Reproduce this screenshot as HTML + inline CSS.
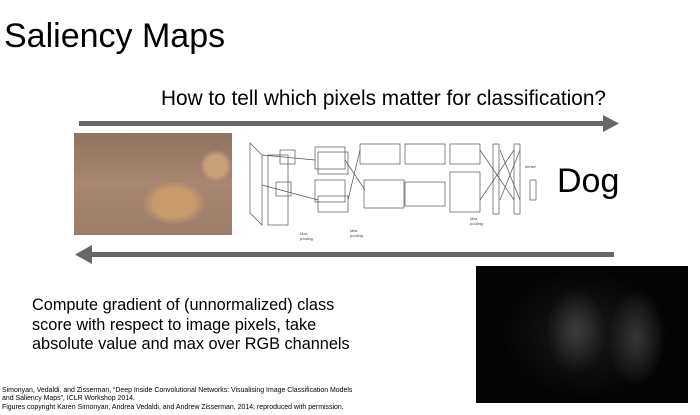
<!DOCTYPE html>
<html><head><meta charset="utf-8"><style>
html,body{margin:0;padding:0;background:#fff;}
body{width:700px;height:415px;position:relative;overflow:hidden;font-family:"Liberation Sans",Arial,sans-serif;color:#000;}
.a{position:absolute;white-space:nowrap;}
</style></head><body>
<div class="a" style="left:4px;top:17px;font-size:34px;">Saliency Maps</div>
<div class="a" style="left:161px;top:87px;font-size:20.8px;">How to tell which pixels matter for classification?</div>
<svg class="a" style="left:0;top:0" width="700" height="415">
<rect x="79" y="121" width="526" height="5" fill="#666"/>
<polygon points="603,115 619,123.5 603,132" fill="#666"/>
<rect x="88" y="252" width="526" height="5" fill="#666"/>
<polygon points="92,245 75,254.5 92,264" fill="#666"/>
<g stroke="#555" fill="none" stroke-width="0.7">
<polygon points="250,143 262,155 262,225 250,213"/>
<rect x="268" y="155" width="20" height="70"/>
<rect x="280" y="150" width="15" height="14"/><rect x="276" y="182" width="15" height="14"/>
<rect x="315" y="147" width="30" height="22"/><rect x="318" y="152" width="30" height="22"/>
<rect x="315" y="180" width="30" height="22"/><rect x="318" y="196" width="30" height="16"/>
<rect x="360" y="144" width="40" height="20"/><rect x="364" y="180" width="40" height="28"/>
<rect x="405" y="144" width="40" height="20"/><rect x="405" y="182" width="40" height="24"/>
<rect x="450" y="144" width="30" height="20"/><rect x="450" y="172" width="30" height="40"/>
<rect x="493" y="144" width="6" height="70"/><rect x="514" y="144" width="6" height="70"/>
<rect x="530" y="180" width="6" height="20"/>
<line x1="262" y1="155" x2="315" y2="160"/><line x1="262" y1="185" x2="318" y2="200"/>
<line x1="345" y1="160" x2="365" y2="190"/><line x1="348" y1="200" x2="360" y2="150"/>
<line x1="480" y1="150" x2="514" y2="200"/><line x1="480" y1="200" x2="514" y2="150"/>
<line x1="500" y1="150" x2="520" y2="200"/><line x1="500" y1="200" x2="520" y2="150"/>
</g>
<g font-size="4" fill="#444" font-family="Liberation Sans">
<text x="300" y="235">Max</text><text x="300" y="240">pooling</text>
<text x="350" y="232">Max</text><text x="350" y="237">pooling</text>
<text x="470" y="220">Max</text><text x="470" y="225">pooling</text>
<text x="525" y="168">dense</text>
</g>
</svg>
<div class="a" style="left:74px;top:133px;width:158px;height:102px;background:radial-gradient(ellipse 32px 22px at 100px 70px,#c99a6c 65%,transparent 100%),radial-gradient(ellipse 16px 16px at 142px 33px,#caa078 65%,transparent 100%),linear-gradient(180deg,#8f7360,#a88670 50%,#9c7d6a);"></div>
<div class="a" style="left:557px;top:162px;font-size:34px;">Dog</div>
<div class="a" style="left:476px;top:266px;width:212px;height:137px;background:radial-gradient(ellipse 30px 42px at 100px 65px,#3c3c3c,transparent 100%),radial-gradient(ellipse 28px 48px at 160px 72px,#363636,transparent 100%),radial-gradient(ellipse 85px 65px at 110px 68px,#181818,#040404 100%);"></div>
<div class="a" style="left:32px;top:296px;font-size:16.3px;line-height:19.5px;">Compute gradient of (unnormalized) class<br>score with respect to image pixels, take<br>absolute value and max over RGB channels</div>
<div class="a" style="left:2px;top:387px;font-size:6.95px;line-height:8.3px;">Simonyan, Vedaldi, and Zisserman, “Deep Inside Convolutional Networks: Visualising Image Classification Models<br>and Saliency Maps”, ICLR Workshop 2014.<br>Figures copyright Karen Simonyan, Andrea Vedaldi, and Andrew Zisserman, 2014; reproduced with permission.</div>
</body></html>
